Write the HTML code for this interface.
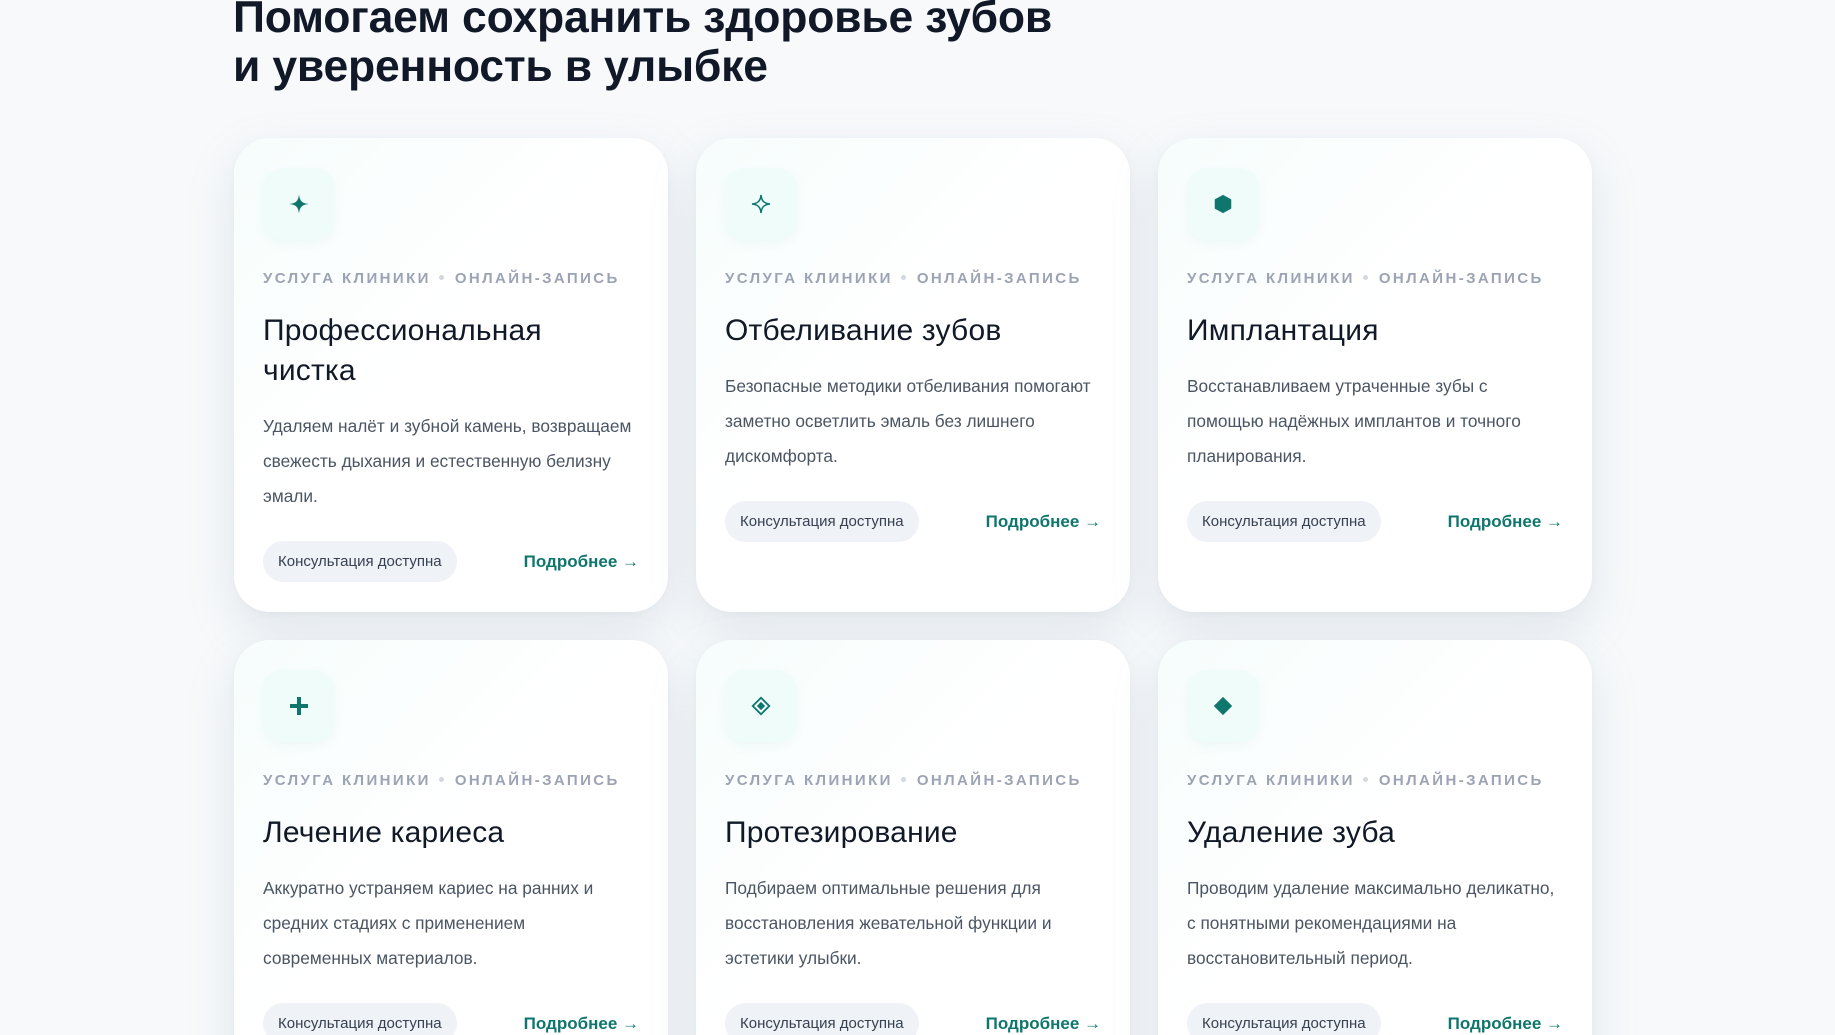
<!DOCTYPE html>
<html><head><meta charset="utf-8">
<style>
*{box-sizing:border-box;margin:0;padding:0}
html,body{width:1835px;height:1035px;overflow:hidden}
body{background:#f7f9fb;font-family:"Liberation Sans","DejaVu Sans",sans-serif;position:relative}
h1{position:absolute;left:233px;top:-7px;font-size:44.5px;line-height:49px;font-weight:700;color:#111827;letter-spacing:-0.2px}
.grid{position:absolute;left:234px;top:138px;display:grid;grid-template-columns:repeat(3,434px);grid-template-rows:474px 474px;column-gap:28px;row-gap:28px}
.card{background:linear-gradient(135deg,#f6fdfc 0%,#ffffff 45%,#ffffff 100%);border-radius:36px;box-shadow:0 18px 45px rgba(148,170,180,0.22),0 2px 6px rgba(148,170,180,0.08);padding:30px 29px 29px 29px;position:relative}
.ic{width:72px;height:72px;border-radius:20px;background:#effcf9;box-shadow:0 4px 10px rgba(150,200,190,0.10);display:flex;align-items:center;justify-content:center}
.meta{margin-top:29px;font-size:15px;font-weight:700;letter-spacing:2.4px;color:#9ca3b4;white-space:nowrap;height:20px;line-height:20px}
.meta span{display:inline-block;width:5px;height:5px;border-radius:50%;background:#d3d8e0;vertical-align:middle;margin:0 11px 3px 8px}
.t{margin-top:22px;font-size:30px;line-height:40px;color:#111827;font-weight:400;letter-spacing:0.2px}
.d{margin-top:18px;font-size:17.3px;line-height:35px;color:#4b5563;width:372px}
.f{margin-top:27px;display:flex;justify-content:space-between;align-items:center}
.pill{background:#eff2f6;border-radius:21px;height:41px;line-height:41px;padding:0 15px;font-size:15px;color:#374151}
.lk{font-size:17px;color:#0f766e;font-weight:700}
</style></head><body>
<h1>Помогаем сохранить здоровье зубов<br>и уверенность в улыбке</h1>
<div class="grid">
<div class="card"><div class="ic"><svg width="24" height="24" viewBox="0 0 24 24"><path d="M12 2C12.6 9 15 11.4 22 12 15 12.6 12.6 15 12 22 11.4 15 9 12.6 2 12 9 11.4 11.4 9 12 2Z" fill="#0f766e"/></svg></div>
<div class="meta">УСЛУГА КЛИНИКИ<span></span>ОНЛАЙН-ЗАПИСЬ</div>
<div class="t">Профессиональная<br>чистка</div>
<div class="d">Удаляем налёт и зубной камень, возвращаем свежесть дыхания и естественную белизну эмали.</div>
<div class="f"><div class="pill">Консультация доступна</div><div class="lk">Подробнее →</div></div></div>

<div class="card"><div class="ic"><svg width="24" height="24" viewBox="0 0 24 24"><path d="M12 3C12.6 9 15 11.4 21 12 15 12.6 12.6 15 12 21 11.4 15 9 12.6 3 12 9 11.4 11.4 9 12 3Z" fill="none" stroke="#0f766e" stroke-width="1.5"/></svg></div>
<div class="meta">УСЛУГА КЛИНИКИ<span></span>ОНЛАЙН-ЗАПИСЬ</div>
<div class="t">Отбеливание зубов</div>
<div class="d">Безопасные методики отбеливания помогают заметно осветлить эмаль без лишнего дискомфорта.</div>
<div class="f"><div class="pill">Консультация доступна</div><div class="lk">Подробнее →</div></div></div>

<div class="card"><div class="ic"><svg width="22" height="22" viewBox="0 0 24 24"><path d="M12 2L21 7V17L12 22 3 17V7Z" fill="#0f766e"/></svg></div>
<div class="meta">УСЛУГА КЛИНИКИ<span></span>ОНЛАЙН-ЗАПИСЬ</div>
<div class="t">Имплантация</div>
<div class="d">Восстанавливаем утраченные зубы с помощью надёжных имплантов и точного планирования.</div>
<div class="f"><div class="pill">Консультация доступна</div><div class="lk">Подробнее →</div></div></div>

<div class="card"><div class="ic"><svg width="24" height="24" viewBox="0 0 24 24"><path d="M10 3H14V10H21V14H14V21H10V14H3V10H10Z" fill="#0f766e"/></svg></div>
<div class="meta">УСЛУГА КЛИНИКИ<span></span>ОНЛАЙН-ЗАПИСЬ</div>
<div class="t">Лечение кариеса</div>
<div class="d">Аккуратно устраняем кариес на ранних и средних стадиях с применением современных материалов.</div>
<div class="f"><div class="pill">Консультация доступна</div><div class="lk">Подробнее →</div></div></div>

<div class="card"><div class="ic"><svg width="22" height="22" viewBox="0 0 24 24"><path d="M12 3L21 12 12 21 3 12Z" fill="none" stroke="#0f766e" stroke-width="2"/><path d="M12 7.5L16.5 12 12 16.5 7.5 12Z" fill="#0f766e"/></svg></div>
<div class="meta">УСЛУГА КЛИНИКИ<span></span>ОНЛАЙН-ЗАПИСЬ</div>
<div class="t">Протезирование</div>
<div class="d">Подбираем оптимальные решения для восстановления жевательной функции и эстетики улыбки.</div>
<div class="f"><div class="pill">Консультация доступна</div><div class="lk">Подробнее →</div></div></div>

<div class="card"><div class="ic"><svg width="22" height="22" viewBox="0 0 24 24"><path d="M12 2L22 12 12 22 2 12Z" fill="#0f766e"/></svg></div>
<div class="meta">УСЛУГА КЛИНИКИ<span></span>ОНЛАЙН-ЗАПИСЬ</div>
<div class="t">Удаление зуба</div>
<div class="d">Проводим удаление максимально деликатно, с понятными рекомендациями на восстановительный период.</div>
<div class="f"><div class="pill">Консультация доступна</div><div class="lk">Подробнее →</div></div></div>
</div>
</body></html>
